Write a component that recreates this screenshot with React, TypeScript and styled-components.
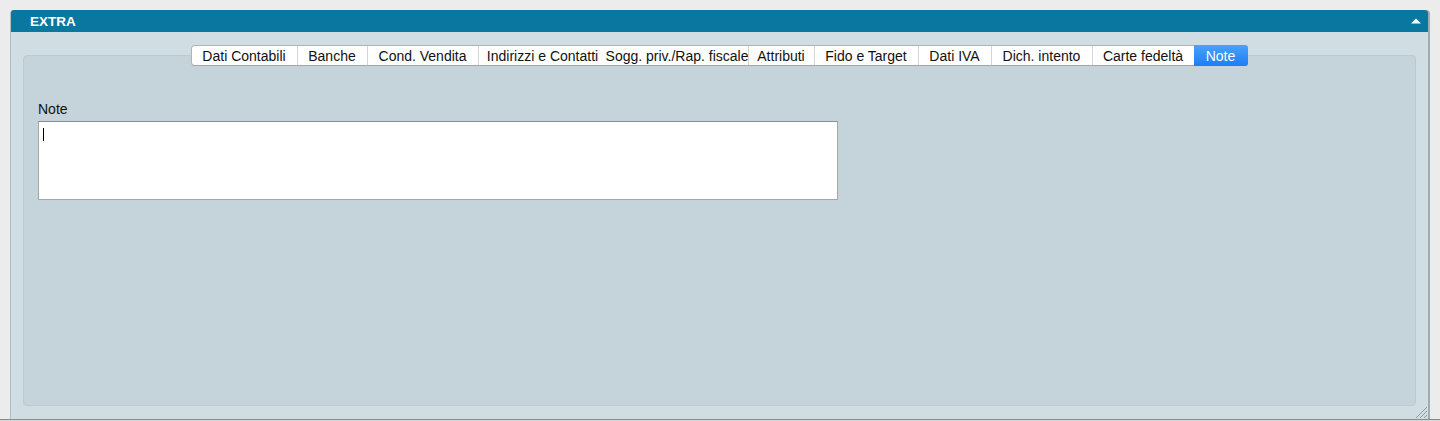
import React from "react";
import styled, { createGlobalStyle } from "styled-components";

const Global = createGlobalStyle`
  html, body { margin: 0; padding: 0; }
  body {
    background: #ececec;
    font-family: "Liberation Sans", Arial, sans-serif;
    font-size: 13px;
    color: #111;
  }
`;

const Page = styled.div`
  display: flex;
  flex-direction: column;
  height: 421px;
  padding-top: 10px;
  box-sizing: border-box;
`;

const Panel = styled.section`
  position: relative;
  margin: 0 10px 0 10px;
  height: 409px;
  display: flex;
  flex-direction: column;
  background: #d0dde3;
  border-left: 1px solid #aebcc3;
  border-right: 2px solid #9eacb3;
  border-radius: 4px 4px 0 0;
  box-sizing: border-box;
`;

const Header = styled.header`
  height: 22px;
  flex: none;
  display: flex;
  align-items: center;
  justify-content: space-between;
  padding: 0 7px 0 19px;
  background: #0a77a0;
  border-radius: 3px 3px 0 0;
  color: #fff;
  font-weight: bold;
  font-size: 13.5px;
`;

const Body = styled.div`
  flex: 1;
  display: flex;
  flex-direction: column;
  padding: 13px 12px 13px 12px;
  min-height: 0;
`;

const TabRow = styled.nav`
  position: relative;
  z-index: 1;
  align-self: center;
  display: flex;
  height: 21px;
  margin-bottom: -11px;
  margin-left: -1px;
  background: #fff;
  border: 1px solid #b3b3b3;
  border-bottom-color: #a4a4a4;
  border-radius: 4px;
  box-sizing: border-box;
`;

const Tab = styled.div<{ $w: number; $active?: boolean; $sep?: boolean }>`
  width: ${(p) => p.$w}px;
  display: flex;
  align-items: center;
  justify-content: center;
  box-sizing: border-box;
  font-size: 14px;
  white-space: nowrap;
  color: ${(p) => (p.$active ? "#fff" : "#111")};
  border-left: ${(p) => (p.$sep ? "1px solid #d6d6d6" : "none")};
  background: ${(p) =>
    p.$active ? "linear-gradient(#4aa2fd, #1b7df7)" : "transparent"};
  border-radius: ${(p) => (p.$active ? "0 3px 3px 0" : "0")};
  margin: ${(p) => (p.$active ? "-1px -1px -1px 0" : "0")};
`;

const Box = styled.div`
  flex: 1;
  display: flex;
  flex-direction: column;
  align-items: flex-start;
  background: #c5d3da;
  border: 1px solid #bccad1;
  border-radius: 4px;
  padding: 45px 14px 0 14px;
`;

const Label = styled.label`
  line-height: 16px;
  font-size: 14px;
  margin-bottom: 4px;
`;

const Field = styled.div`
  width: 800px;
  height: 79px;
  box-sizing: border-box;
  background: #fff;
  border: 1px solid #a6a6a6;
  border-top-color: #8e8e8e;
  padding: 6px 4px;
`;

const Caret = styled.span`
  display: block;
  width: 1px;
  height: 13px;
  background: #000;
`;

const Grip = styled.svg`
  position: absolute;
  right: 0;
  bottom: 0;
`;

const BottomLine = styled.div`
  height: 1px;
  background: #8a8a8a;
  border-bottom: 1px solid #d8d8d8;
`;

const tabs: { label: string; w: number }[] = [
  { label: "Dati Contabili", w: 105 },
  { label: "Banche", w: 70 },
  { label: "Cond. Vendita", w: 111 },
  { label: "Indirizzi e Contatti", w: 129 },
  { label: "Sogg. priv./Rap. fiscale", w: 141 },
  { label: "Attributi", w: 66 },
  { label: "Fido e Target", w: 104 },
  { label: "Dati IVA", w: 73 },
  { label: "Dich. intento", w: 101 },
  { label: "Carte fedeltà", w: 102 },
  { label: "Note", w: 54 },
];

export default function App() {
  return (
    <>
      <Global />
      <Page>
        <Panel>
          <Header>
            <span>EXTRA</span>
            <svg width="10" height="6" viewBox="0 0 10 6">
              <polygon points="5,0.5 10,5.5 0,5.5" fill="#fff" />
            </svg>
          </Header>
          <Body>
            <TabRow>
              {tabs.map((t, i) => (
                <Tab
                  key={t.label}
                  $w={t.w}
                  $active={t.label === "Note"}
                  $sep={i > 0 && i !== 4 && i !== 10}
                >
                  {t.label}
                </Tab>
              ))}
            </TabRow>
            <Box>
              <Label>Note</Label>
              <Field>
                <Caret />
              </Field>
            </Box>
          </Body>
          <Grip width="14" height="14" viewBox="0 0 14 14">
            <path d="M2 13 L13 2 M6 13 L13 6 M10 13 L13 10" stroke="#8e9aa0" strokeWidth="1" />
          </Grip>
        </Panel>
        <BottomLine />
      </Page>
    </>
  );
}
